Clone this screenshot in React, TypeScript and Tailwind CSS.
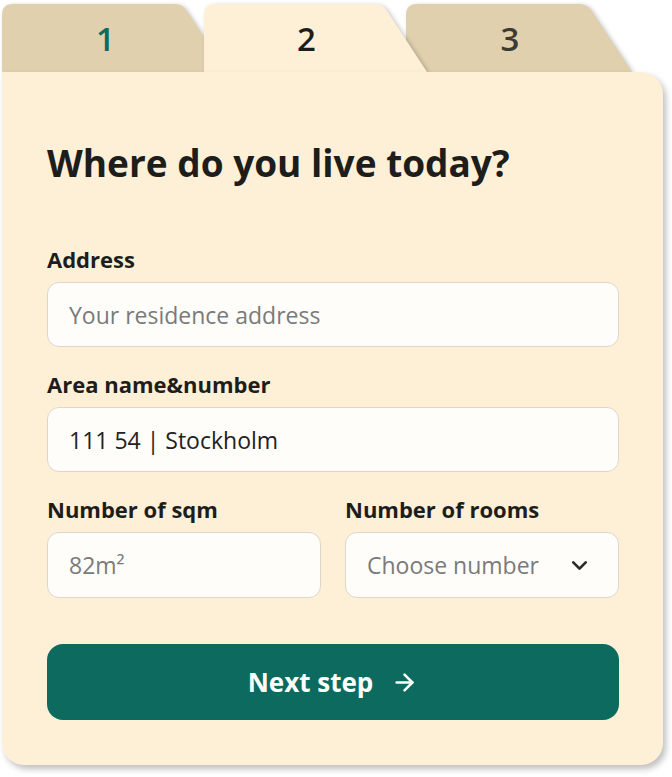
import { ChevronDown, ArrowRight } from 'lucide-react';

function Tab({ label, active, className, textClass }: { label: string; active?: boolean; className: string; textClass: string }) {
  const fill = active ? '#fef0d7' : '#e0d0ae';
  return (
    <div className={`relative h-[69px] ${className}`}>
      <svg
        className="absolute inset-0 h-full w-full [filter:drop-shadow(2px_1px_2px_rgba(0,0,0,0.22))]"
        viewBox="0 0 224 69"
        preserveAspectRatio="none"
      >
        <path d="M0 69 L0 12 Q0 1 11 1 L172 1 Q180 1 184 8 L224 69 Z" fill={fill} />
      </svg>
      <div className={`relative flex h-full items-center justify-center pr-[18px] pt-[3px] text-[33px] font-semibold ${textClass}`}>
        {label}
      </div>
    </div>
  );
}

export default function App() {
  const font = { fontFamily: '"Open Sans", "Noto Sans", sans-serif' };
  return (
    <div className="min-h-[777px] w-[672px] bg-white pl-[2px] pt-[3px]" style={font}>
      <div className="flex w-[661px]">
        <Tab label="1" className="z-0 w-[225px]" textClass="text-[#0c6b5e]" />
        <Tab label="2" active className="z-10 -ml-[23px] w-[223px]" textClass="text-[#1d1d1b]" />
        <Tab label="3" className="z-0 -ml-[21px] w-[226px]" textClass="text-[#3b3a33]" />
      </div>
      <div className="relative z-20 h-[693px] w-[661px] rounded-b-[22px] rounded-tr-[22px] bg-[#fef0d7] pt-[69px] pr-[44px] pl-[45px] shadow-[3px_4px_6px_rgba(0,0,0,0.25)]">
        <h1 className="h-[44px] text-[37px] leading-[44px] font-bold text-[#1d1d1b]">
          Where do you live today?
        </h1>

        <div className="mt-[60px] flex flex-col">
          <label className="h-[28px] text-[22px] leading-[28px] font-bold text-[#1d1d1b]">Address</label>
          <input
            placeholder="Your residence address"
            className="mt-[9px] h-[65px] w-full rounded-[12px] border-[1.5px] border-[#dcd6cc] bg-[#fffdf9] px-[21px] text-[23px] text-[#222] outline-none placeholder:text-[#7a7a7a]"
          />

          <label className="mt-[23px] h-[28px] text-[22px] leading-[28px] font-bold text-[#1d1d1b]">Area name&amp;number</label>
          <input
            defaultValue="111 54 | Stockholm"
            className="mt-[9px] h-[65px] w-full rounded-[12px] border-[1.5px] border-[#dcd6cc] bg-[#fffdf9] px-[21px] text-[23px] text-[#222] outline-none"
          />

          <div className="mt-[23px] grid grid-cols-2 gap-x-[24px]">
            <div className="flex flex-col">
              <label className="h-[28px] text-[22px] leading-[28px] font-bold text-[#1d1d1b]">Number of sqm</label>
              <input
                placeholder="82m²"
                className="mt-[9px] h-[66px] w-full rounded-[12px] border-[1.5px] border-[#dcd6cc] bg-[#fffdf9] px-[21px] text-[23px] text-[#222] outline-none placeholder:text-[#7a7a7a]"
              />
            </div>
            <div className="flex flex-col">
              <label className="h-[28px] text-[22px] leading-[28px] font-bold text-[#1d1d1b]">Number of rooms</label>
              <div className="mt-[9px] flex h-[66px] w-full items-center justify-between rounded-[12px] border-[1.5px] border-[#dcd6cc] bg-[#fffdf9] pr-[26px] pl-[21px]">
                <span className="text-[23px] text-[#7a7a7a]">Choose number</span>
                <ChevronDown size={25} strokeWidth={2.6} className="text-[#2a2a28]" />
              </div>
            </div>
          </div>

          <button className="mt-[46px] flex h-[76px] w-full items-center justify-center gap-[18px] rounded-[16px] bg-[#0c6b5e] text-[26px] font-bold text-white">
            <span>Next step</span>
            <ArrowRight size={27} strokeWidth={2.2} />
          </button>
        </div>
      </div>
    </div>
  );
}
